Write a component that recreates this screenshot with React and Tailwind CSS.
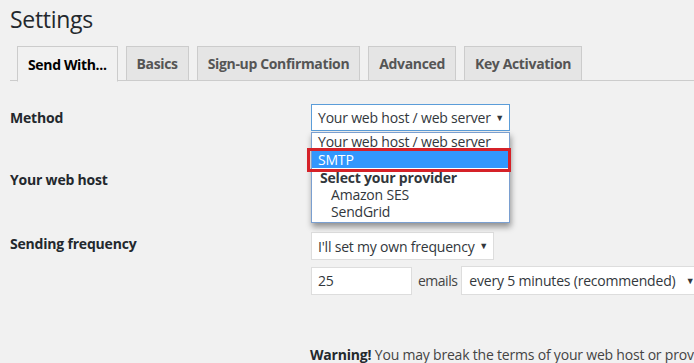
export default function App() {
    const tabs = ["Send With...", "Basics", "Sign-up Confirmation", "Advanced", "Key Activation"];

    return (
        <div className="w-[694px] h-[363px] bg-[#f1f1f1] overflow-hidden relative text-[#23282d] font-['Open_Sans',sans-serif]">
            <h1 className="pl-[10px] pt-[5px] text-[23px] leading-[29px] font-normal tracking-[-0.3px]">Settings</h1>

            {/* Tabs */}
            <div className="ml-[10px] mt-[12px] pl-[7px] flex gap-2 border-b border-[#ccc] h-[35px]">
                {tabs.map((t, i) => (
                    <div
                        key={t}
                        className={
                            i === 0
                                ? "shrink-0 h-[36px] px-[10px] border border-[#ccc] border-b-[#f1f1f1] bg-[#f1f1f1] text-black text-[14px] font-bold tracking-[-0.35px] flex items-center"
                                : "shrink-0 h-[35px] px-[10px] border border-[#ccc] bg-[#e5e5e5] text-[#555] text-[14px] font-bold tracking-[-0.35px] flex items-center"
                        }
                    >
                        {t}
                    </div>
                ))}
            </div>

            {/* Form */}
            <div className="mt-[23px] tracking-[-0.2px]">
                <div className="flex items-center h-[27px]">
                    <div className="w-[311px] shrink-0 pl-[10px] text-[14px] font-bold">Method</div>
                    <div className="w-[199px] shrink-0 h-[27px] border border-[#5b9dd9] bg-white flex items-center justify-between pl-[6px] pr-[5px] text-[14px] text-[#32373c] whitespace-nowrap">
                        <span>Your web host / web server</span>
                        <span className="text-[9px]">▼</span>
                    </div>
                </div>

                <div className="flex items-center h-[35px] mt-[31px]">
                    <div className="w-[311px] shrink-0 pl-[10px] text-[14px] font-bold">Your web host</div>
                </div>

                <div className="flex items-start h-[29px] mt-[35px]">
                    <div className="w-[311px] shrink-0 pl-[10px] pt-[1px] text-[14px] font-bold">Sending frequency</div>
                    <div className="w-[183px] shrink-0 h-[28px] border border-[#ddd] bg-white flex items-center justify-between pl-[6px] pr-[5px] text-[14px] text-[#32373c] whitespace-nowrap">
                        <span>I'll set my own frequency</span>
                        <span className="text-[9px]">▼</span>
                    </div>
                </div>

                <div className="flex items-center h-[29px] mt-[5px] pl-[311px]">
                    <div className="w-[101px] shrink-0 h-[28px] border border-[#ddd] bg-white flex items-center px-[6px] text-[14px] text-[#32373c]">25</div>
                    <span className="ml-[6px] mr-[4px] text-[14px] text-[#444] shrink-0 tracking-[-0.5px]">emails</span>
                    <div className="w-[240px] shrink-0 h-[29px] border border-[#ddd] bg-white flex items-center justify-between pl-[7px] pr-[6px] text-[14px] text-[#32373c] whitespace-nowrap">
                        <span>every 5 minutes (recommended)</span>
                        <span className="text-[9px]">▼</span>
                    </div>
                </div>

                <div className="pl-[310px] mt-[49px] text-[14px] text-[#444] whitespace-nowrap">
                    <b className="text-[#23282d]">Warning!</b> You may break the terms of your web host or provider
                </div>
            </div>

            {/* Open dropdown list */}
            <div className="absolute left-[311px] top-[132px] w-[199px] h-[91px] bg-white border border-[#7a9fd0] shadow-[1px_4px_6px_rgba(0,0,0,0.4)] text-[14px] leading-[17px] text-[#32373c] tracking-[-0.2px] whitespace-nowrap">
                <div className="px-[6px]">Your web host / web server</div>
                <div className="px-[6px] mt-[1px] bg-[#3297fd] text-white">SMTP</div>
                <div className="px-[8px] mt-[1px] font-bold">Select your provider</div>
                <div className="pl-[19px]">Amazon SES</div>
                <div className="pl-[19px]">SendGrid</div>
            </div>
            <div className="absolute left-[307px] top-[148px] w-[204px] h-[24px] border-[3px] border-[#d52128]"></div>
        </div>
    );
}
